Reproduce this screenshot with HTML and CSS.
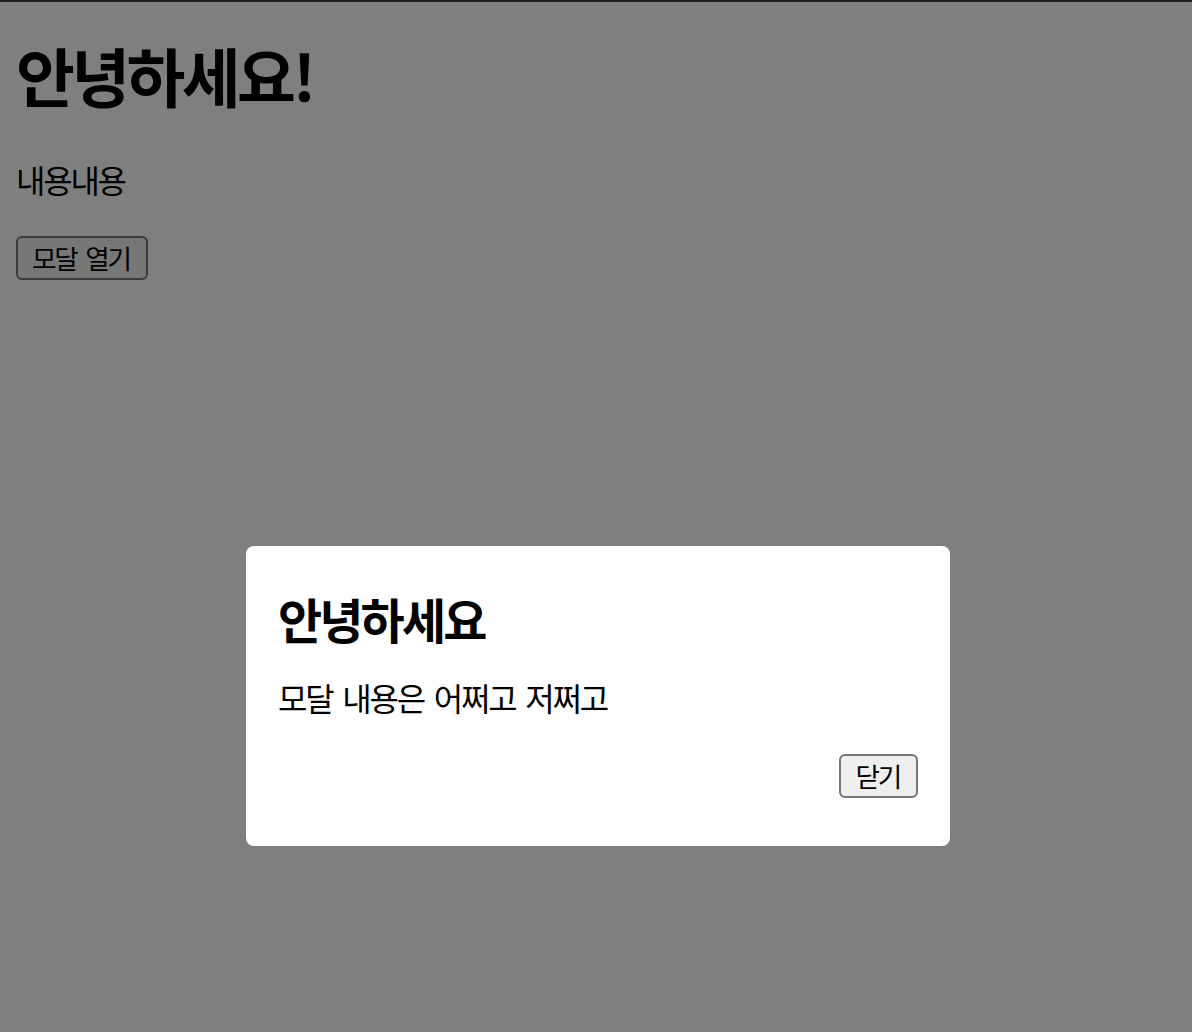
FILE: index.html
```html
<!DOCTYPE html>
<html lang="ko">
<head>
<meta charset="utf-8">
<title>모달</title>
<link rel="stylesheet" href="styles.css">
</head>
<body>
<div class="topline"></div>
<main class="page">
  <h1 class="title">안녕하세요!</h1>
  <p class="text">내용내용</p>
  <button class="btn" type="button">모달 열기</button>
</main>
<div class="overlay"></div>
<div class="modal">
  <h2 class="modal-title">안녕하세요</h2>
  <p class="modal-text">모달 내용은 어쩌고 저쩌고</p>
  <div class="modal-actions">
    <button class="btn" type="button">닫기</button>
  </div>
</div>
</body>
</html>
```

FILE: styles.css
```css
html, body {
  margin: 0;
  padding: 0;
  background: #ffffff;
  height: 100%;
}
body {
  font-family: "Noto Sans CJK KR", "Noto Sans", sans-serif;
  color: #000;
  letter-spacing: -2.24px;
  word-spacing: 3.2px;
  overflow: hidden;
}
.topline {
  position: fixed;
  top: 0;
  left: 0;
  right: 0;
  height: 2px;
  background: #1c1c1c;
  z-index: 3;
}
.page {
  padding: 36px 16px 0;
}
.title {
  margin: 0;
  font-size: 64px;
  line-height: 77px;
  font-weight: 700;
  letter-spacing: -3.6px;
}
.text {
  margin: 47px 0 0;
  font-size: 32px;
  line-height: 38px;
}
.btn {
  margin-top: 38px;
  font-family: "Noto Sans CJK KR", "Noto Sans", sans-serif;
  font-size: 26.67px;
  line-height: 36px;
  letter-spacing: -2.24px;
  word-spacing: 3.4px;
  padding: 2px 16px 2px 14px;
  border: 2px solid #767676;
  border-radius: 6px;
  background: #efefef;
  color: #000;
}
.overlay {
  position: fixed;
  inset: 0;
  background: rgba(0, 0, 0, 0.5);
  z-index: 1;
}
.modal {
  position: absolute;
  left: 246px;
  top: 546px;
  width: 704px;
  box-sizing: border-box;
  padding: 43px 32px 48px;
  background: #fff;
  border-radius: 8px;
  z-index: 2;
}
.modal-title {
  margin: 0;
  font-size: 48px;
  line-height: 58px;
  font-weight: 700;
  letter-spacing: -2.85px;
}
.modal-text {
  margin: 31px 0 0;
  font-size: 32px;
  line-height: 38px;
}
.modal-actions {
  display: flex;
  justify-content: flex-end;
  margin-top: 38px;
}
.modal-actions .btn {
  margin-top: 0;
}
```
